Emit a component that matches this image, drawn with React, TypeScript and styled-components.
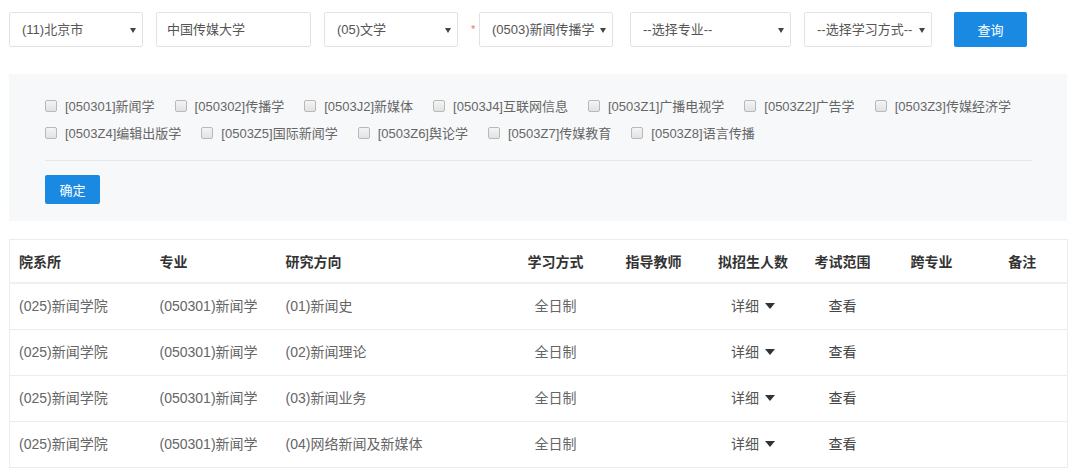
import styled, { createGlobalStyle } from "styled-components";

const GlobalStyle = createGlobalStyle`
  html, body {
    margin: 0;
    padding: 0;
    background: #fff;
  }
  body {
    font-family: "Liberation Sans", "Noto Sans CJK SC", sans-serif;
    font-size: 13px;
    color: #555;
  }
`;

type Field = {
  label: string;
  width: number;
  gap: number;
  kind: "select" | "input";
  required?: boolean;
};

const fields: Field[] = [
  { label: "(11)北京市", width: 134, gap: 0, kind: "select" },
  { label: "中国传媒大学", width: 155, gap: 13, kind: "input" },
  { label: "(05)文学", width: 134, gap: 13, kind: "select" },
  { label: "(0503)新闻传播学", width: 134, gap: 21, kind: "select", required: true },
  { label: "--选择专业--", width: 161, gap: 17, kind: "select" },
  { label: "--选择学习方式--", width: 128, gap: 13, kind: "select" },
];

const majors = [
  "[050301]新闻学",
  "[050302]传播学",
  "[0503J2]新媒体",
  "[0503J4]互联网信息",
  "[0503Z1]广播电视学",
  "[0503Z2]广告学",
  "[0503Z3]传媒经济学",
  "[0503Z4]编辑出版学",
  "[0503Z5]国际新闻学",
  "[0503Z6]舆论学",
  "[0503Z7]传媒教育",
  "[0503Z8]语言传播",
];

const columns = [
  { title: "院系所", width: 141, align: "left" },
  { title: "专业", width: 126, align: "left" },
  { title: "研究方向", width: 234, align: "left" },
  { title: "学习方式", width: 90, align: "center" },
  { title: "指导教师", width: 106, align: "center" },
  { title: "拟招生人数", width: 93, align: "center" },
  { title: "考试范围", width: 86, align: "center" },
  { title: "跨专业", width: 92, align: "center" },
  { title: "备注", width: 90, align: "center" },
] as const;

const directions = [
  "(01)新闻史",
  "(02)新闻理论",
  "(03)新闻业务",
  "(04)网络新闻及新媒体",
];

const Page = styled.div`
  width: 1058px;
  padding: 12px 13px 0 9px;
`;

const Toolbar = styled.div`
  display: flex;
  align-items: center;
  height: 35px;
`;

const SelectWrap = styled.div<{ $gap: number }>`
  position: relative;
  margin-left: ${(p) => p.$gap}px;
`;

const FieldBox = styled.div<{ $width: number }>`
  position: relative;
  box-sizing: border-box;
  width: ${(p) => p.$width}px;
  height: 35px;
  display: flex;
  align-items: center;
  border: 1px solid #e2e2e2;
  border-radius: 2px;
  background: #fff;
  color: #555;
  font-size: 13px;
  white-space: nowrap;
  overflow: hidden;
`;

const FieldText = styled.span<{ $pad: number }>`
  padding-left: ${(p) => p.$pad}px;
  line-height: 16px;
`;

const Caret = styled.span`
  position: absolute;
  right: 6px;
  top: 15px;
  width: 0;
  height: 0;
  border-left: 3px solid transparent;
  border-right: 3px solid transparent;
  border-top: 5px solid #444;
`;

const Required = styled.span`
  position: absolute;
  left: -8px;
  top: 12px;
  color: #f56c6c;
  font-size: 11px;
  line-height: 11px;
`;

const PrimaryButton = styled.button<{ $width: number; $height: number }>`
  box-sizing: border-box;
  width: ${(p) => p.$width}px;
  height: ${(p) => p.$height}px;
  border: none;
  border-radius: 2px;
  background: #1a89e2;
  color: #fff;
  font-family: "Liberation Sans", "Noto Sans CJK SC", sans-serif;
  font-size: 13px;
  padding: 0;
  cursor: pointer;
`;

const SearchButton = styled(PrimaryButton)`
  margin-left: 22px;
`;

const Panel = styled.div`
  box-sizing: border-box;
  margin-top: 27px;
  height: 147px;
  padding: 18px 35px 0 36px;
  background: #f7f8fa;
`;

const CheckList = styled.div`
  display: flex;
  flex-wrap: wrap;
  column-gap: 20px;
`;

const CheckItem = styled.label`
  display: flex;
  align-items: center;
  height: 27px;
  color: #666;
  font-size: 13px;
  white-space: nowrap;
`;

const Box = styled.input`
  appearance: none;
  box-sizing: border-box;
  width: 12px;
  height: 12px;
  margin: 0 8px 0 0;
  border: 1px solid #b9b9b9;
  border-radius: 2px;
  background: linear-gradient(#f4f4f4, #e2e2e2);
`;

const Divider = styled.div`
  height: 1px;
  margin-top: 14px;
  background: #e6e7e9;
`;

const ConfirmRow = styled.div`
  margin-top: 14px;
`;

const Table = styled.table`
  margin-top: 18px;
  width: 1058px;
  border-collapse: collapse;
  table-layout: fixed;
  border: 1px solid #ececec;
`;

const HeadCell = styled.th<{ $width: number; $align: string }>`
  box-sizing: border-box;
  width: ${(p) => p.$width}px;
  height: 43px;
  padding: 0 ${(p) => (p.$align === "left" ? "9px" : "0")};
  text-align: ${(p) => p.$align};
  font-size: 14px;
  font-weight: bold;
  color: #333;
  border-bottom: 2px solid #f0f0f0;
`;

const Cell = styled.td<{ $align: string; $dark?: boolean }>`
  height: 45px;
  padding: 0 ${(p) => (p.$align === "left" ? "9px" : "0")};
  text-align: ${(p) => p.$align};
  font-size: 14px;
  line-height: 18px;
  color: ${(p) => (p.$dark ? "#444" : "#666")};
  border-bottom: 1px solid #ececec;
  white-space: nowrap;
`;

const Detail = styled.span`
  display: inline-flex;
  align-items: center;
  gap: 6px;
  color: #555;
`;

const DownArrow = styled.span`
  width: 0;
  height: 0;
  border-left: 5px solid transparent;
  border-right: 5px solid transparent;
  border-top: 6px solid #333;
`;

export default function App() {
  return (
    <Page>
      <GlobalStyle />
      <Toolbar>
        {fields.map((f) => (
          <SelectWrap key={f.label} $gap={f.gap}>
            {f.required && <Required>*</Required>}
            <FieldBox $width={f.width}>
              <FieldText $pad={f.kind === "input" ? 10 : 12}>{f.label}</FieldText>
              {f.kind === "select" && <Caret />}
            </FieldBox>
          </SelectWrap>
        ))}
        <SearchButton $width={73} $height={35}>查询</SearchButton>
      </Toolbar>

      <Panel>
        <CheckList>
          {majors.map((m) => (
            <CheckItem key={m}>
              <Box type="checkbox" />
              {m}
            </CheckItem>
          ))}
        </CheckList>
        <Divider />
        <ConfirmRow>
          <PrimaryButton $width={55} $height={29}>确定</PrimaryButton>
        </ConfirmRow>
      </Panel>

      <Table>
        <thead>
          <tr>
            {columns.map((c) => (
              <HeadCell key={c.title} $width={c.width} $align={c.align}>
                {c.title}
              </HeadCell>
            ))}
          </tr>
        </thead>
        <tbody>
          {directions.map((d) => (
            <tr key={d}>
              <Cell $align="left">(025)新闻学院</Cell>
              <Cell $align="left">(050301)新闻学</Cell>
              <Cell $align="left">{d}</Cell>
              <Cell $align="center">全日制</Cell>
              <Cell $align="center"></Cell>
              <Cell $align="center">
                <Detail>
                  详细
                  <DownArrow />
                </Detail>
              </Cell>
              <Cell $align="center" $dark>
                查看
              </Cell>
              <Cell $align="center"></Cell>
              <Cell $align="center"></Cell>
            </tr>
          ))}
        </tbody>
      </Table>
    </Page>
  );
}
